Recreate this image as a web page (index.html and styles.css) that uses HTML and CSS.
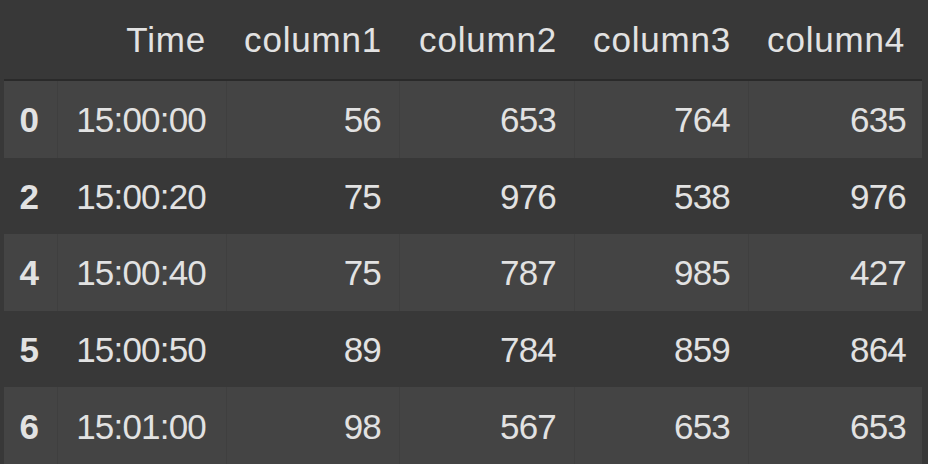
FILE: index.html
```html
<!DOCTYPE html>
<html>
<head>
<meta charset="utf-8">
<link rel="stylesheet" href="styles.css">
</head>
<body>
<div class="wrap">
<table class="df">
  <colgroup>
    <col class="c-idx"><col class="c-time"><col class="c-1"><col class="c-2"><col class="c-3"><col class="c-4">
  </colgroup>
  <thead>
    <tr><th></th><th>Time</th><th>column1</th><th>column2</th><th>column3</th><th>column4</th></tr>
  </thead>
  <tbody>
    <tr><th>0</th><td>15:00:00</td><td>56</td><td>653</td><td>764</td><td>635</td></tr>
    <tr><th>2</th><td>15:00:20</td><td>75</td><td>976</td><td>538</td><td>976</td></tr>
    <tr><th>4</th><td>15:00:40</td><td>75</td><td>787</td><td>985</td><td>427</td></tr>
    <tr><th>5</th><td>15:00:50</td><td>89</td><td>784</td><td>859</td><td>864</td></tr>
    <tr><th>6</th><td>15:01:00</td><td>98</td><td>567</td><td>653</td><td>653</td></tr>
  </tbody>
</table>
</div>
</body>
</html>
```
FILE: styles.css
```css
html, body {
  margin: 0;
  padding: 0;
  background: #383838;
}
.wrap {
  padding-left: 4px;
}
.df {
  border-collapse: separate;
  border-spacing: 0;
  table-layout: fixed;
  width: 918px;
  font-family: "Liberation Sans", Arial, sans-serif;
  font-size: 35px;
  color: #e2e2e2;
}
.c-idx { width: 53px; }
.c-time { width: 169px; }
.c-1 { width: 173px; }
.c-2 { width: 175px; }
.c-3 { width: 174px; }
.c-4 { width: 174px; }
.df th, .df td {
  box-sizing: border-box;
  padding: 0 17px 0 0;
  text-align: right;
  white-space: nowrap;
  line-height: 1;
}
.df thead th {
  height: 81px;
  font-weight: normal;
  letter-spacing: 0.8px;
  border-bottom: 2px solid #2a2a2a;
  padding-bottom: 0;
}
.df tbody th {
  font-weight: bold;
  padding-right: 18px;
}
.df tbody td, .df tbody th {
  height: 76.6px;
  padding-top: 1px;
}
.df tbody td {
  padding-right: 18px;
  letter-spacing: -0.8px;
}
.df tbody td:last-child {
  padding-right: 16px;
}
.df tbody tr:nth-child(odd) th,
.df tbody tr:nth-child(odd) td {
  background: #444444;
}
.df tbody tr:nth-child(odd) td {
  border-left: 1px solid #3f3f3f;
}
.df thead th:nth-child(2),
.df tbody td:first-of-type {
  padding-right: 20px;
}
```
